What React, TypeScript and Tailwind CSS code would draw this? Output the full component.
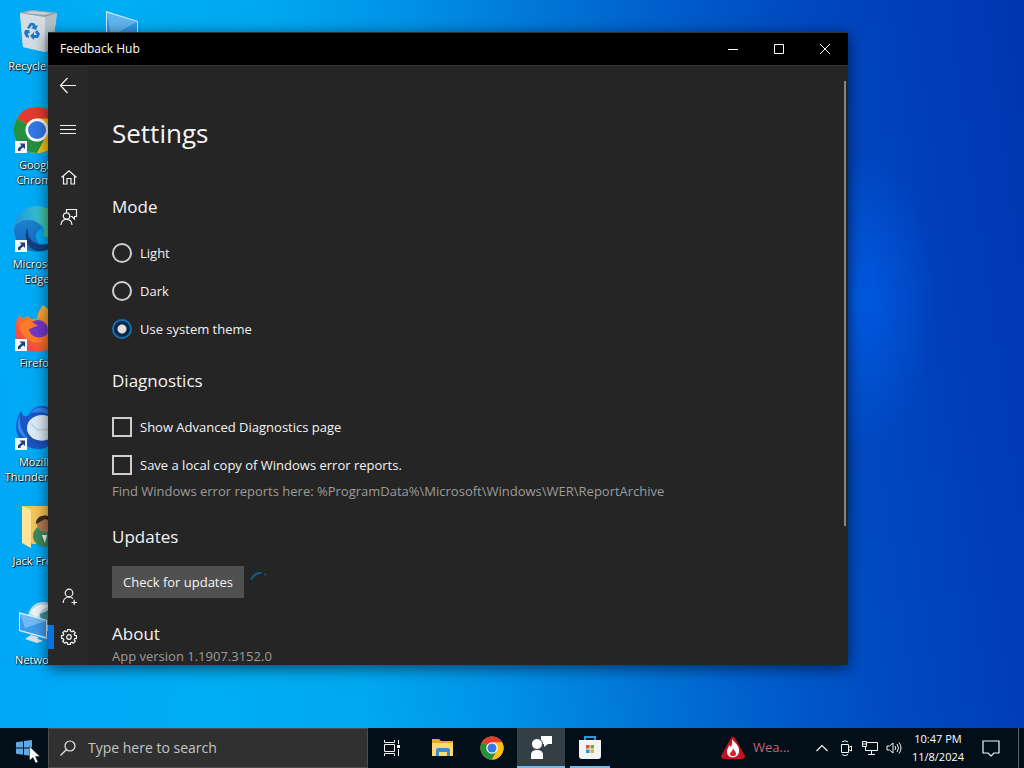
import type { ReactNode } from "react";

function ShortcutArrow() {
  return (
    <g transform="translate(2 35)">
      <rect width="12" height="12" fill="#f4f6f8" />
      <path d="M3 10V7.5L6.5 4.5L4.5 2.5H10V8L8.2 6.2L5.5 8.5V10Z" fill="#1f3f7a" />
    </g>
  );
}

function Art({ children }: { children: ReactNode }) {
  return (
    <svg viewBox="0 0 48 48" className="h-12 w-12 shrink-0" aria-hidden="true">
      {children}
    </svg>
  );
}

const recycleBin = (
  <Art>
    <path d="M7 6L18 3L44 6L39 42L32 45L10 40Z" fill="#cfd8de" />
    <path d="M7 6L32 10L32 45L10 40Z" fill="#d3dce2" />
    <path d="M32 10L44 6L39 42L32 45Z" fill="#b4bfc7" />
    <path d="M7 6L18 3L44 6L32 10Z" fill="#8f9ca6" />
    <path d="M11 6L19 4L39 6L31 8Z" fill="#c9d2d8" />
    <g fill="#1c78c8">
      <path d="M14 21L17 16L21 16L23 19L25 18L23 23L18 21L20 20L19 18L16 22Z" />
      <path d="M24 23L27 27L25 31L21 31V33L17 29L21 25V28H24L22 25Z" />
      <path d="M12 23L16 23L17 26L15 26L16 31L13 30L11 26Z" />
    </g>
  </Art>
);

function ChromeShape() {
  return (
    <g>
      <circle cx="24" cy="24" r="23" fill="#fbc116" />
      <path d="M24 24L4 12.500A23 23 0 0 1 44 12.500Z" fill="#e33b2e" />
      <path d="M4 12.500A23 23 0 0 0 24 47L34 29.500L24 24Z" fill="#24913f" />
      <path d="M24 12.500H44A23 23 0 0 1 24 47L33.500 29.500Z" fill="#fbc116" />
      <circle cx="24" cy="24" r="11.500" fill="#fff" />
      <circle cx="24" cy="24" r="9" fill="#3478e5" />
    </g>
  );
}

const edge = (
  <Art>
    <defs>
      <linearGradient id="edgeTop" x1="0" y1="0" x2="1" y2="0">
        <stop offset="0" stopColor="#1f94d6" />
        <stop offset="0.5" stopColor="#36bdd0" />
        <stop offset="1" stopColor="#5fd65c" />
      </linearGradient>
      <linearGradient id="edgeBody" x1="0" y1="0" x2="0" y2="1">
        <stop offset="0" stopColor="#1b7fcf" />
        <stop offset="1" stopColor="#1569b8" />
      </linearGradient>
    </defs>
    <path d="M1 24A23 23 0 0 1 47 24C47 32 38 34 30 31C36 20 24 12 1 24Z" fill="url(#edgeTop)" />
    <path d="M1 24C5 12 26 12 29 24C20 26 20 40 36 44C18 52 1 41 1 24Z" fill="url(#edgeBody)" />
    <path d="M15 23C13 38 28 44 43 36C36 50 16 50 13 34C12 29 13 25 15 23Z" fill="#123f80" />
  </Art>
);

const firefox = (
  <Art>
    <defs>
      <linearGradient id="foxBody" x1="1" y1="0" x2="0" y2="1">
        <stop offset="0" stopColor="#ffe14a" />
        <stop offset="0.5" stopColor="#ff7a24" />
        <stop offset="1" stopColor="#f0255e" />
      </linearGradient>
    </defs>
    <path d="M30 1C36 6 46 14 46 27A22 21 0 0 1 2 27C2 20 4 14 7 11L9 15L15 12C16 15 20 15 24 15C24 10 27 5 30 1Z" fill="url(#foxBody)" />
    <circle cx="25" cy="26" r="10" fill="#7239c8" />
    <path d="M6 20C13 14 20 18 25 22C20 22 19 25 16 25C17 34 30 37 36 28C36 43 10 44 6 20Z" fill="#ff7a2b" />
  </Art>
);

const thunderbird = (
  <Art>
    <path d="M8 8C10 14 12 14 16 12C20 1 36 0 42 10C50 26 42 46 25 46C8 46 -4 27 8 8Z" fill="#1b55c6" />
    <path d="M7 13C6 22 10 32 17 37C7 34 1 24 7 13Z" fill="#2f8cf0" />
    <path d="M17 10C24 1 35 4 39 12L28 9Z" fill="#2e83ea" />
    <ellipse cx="29" cy="25" rx="15" ry="13" fill="#dcebf8" />
    <path d="M18 20Q23 28 29 27Q35 28 41 20" fill="none" stroke="#bcd2e6" strokeWidth="1.500" />
    <path d="M14 30C18 37 30 41 40 34C34 46 16 44 14 30Z" fill="#1d4fae" />
  </Art>
);

const userFolder = (
  <Art>
    <path d="M9 4H38V42H20L9 38Z" fill="#f1c659" />
    <path d="M9 4L18 8V46L9 41Z" fill="#ffe49a" />
    <ellipse cx="32" cy="34" rx="12" ry="11" fill="#3d8a5d" />
    <circle cx="32" cy="22" r="8" fill="#b77950" />
    <path d="M23 22C22 12 38 10 41 20L32 17Z" fill="#3a2a22" />
    <path d="M29 33L32 41L34 33Z" fill="#fff" />
  </Art>
);

const network = (
  <Art>
    <circle cx="30" cy="16" r="15" fill="#b8dbea" />
    <path d="M17 12C22 2 34 2 36 6C30 6 26 12 24 17Z" fill="#eef6f9" />
    <path d="M27 13L38 8V25L28 21Z" fill="#438b98" />
    <path d="M6 11L34 19V38L6 30Z" fill="#d6f0fd" />
    <path d="M7 13L33 20V36L7 29Z" fill="#3d9be9" />
    <path d="M7 13L33 20L12 27Z" fill="#71bbf4" />
    <path d="M18 34L25 36V38L30 40L24 42L12 38Z" fill="#dce3e8" />
  </Art>
);

const thisPc = (
  <Art>
    <path d="M7 4L39 14V38L7 32Z" fill="#c6eafb" />
    <path d="M8 6L38 15V36L8 30Z" fill="#2f97e4" />
    <path d="M8 6L38 15L12 29Z" fill="#5eb5ef" />
  </Art>
);

const shortcuts: { lines: string[]; art: ReactNode }[] = [
  { lines: ["Recycle Bin"], art: recycleBin },
  { lines: ["Google", "Chrome"], art: <Art><ChromeShape /><ShortcutArrow /></Art> },
  { lines: ["Microsoft", "Edge"], art: <div className="grid *:col-start-1 *:row-start-1">{edge}<Art><ShortcutArrow /></Art></div> },
  { lines: ["Firefox"], art: <div className="grid *:col-start-1 *:row-start-1">{firefox}<Art><ShortcutArrow /></Art></div> },
  { lines: ["Mozilla", "Thunderbird"], art: <div className="grid *:col-start-1 *:row-start-1">{thunderbird}<Art><ShortcutArrow /></Art></div> },
  { lines: ["Jack Frost"], art: userFolder },
  { lines: ["Network"], art: network },
];

function Shortcut({ lines, art }: { lines: string[]; art: ReactNode }) {
  return (
    <button type="button" className="flex h-[99px] w-[74px] flex-col items-center gap-[3px] text-[11px] leading-[15px] text-white [text-shadow:1px_1px_1px_#000,0_0_2px_#000]">
      {art}
      <span className="flex flex-col items-center whitespace-nowrap">
        {lines.map((line) => (
          <span key={line}>{line}</span>
        ))}
      </span>
    </button>
  );
}

function Glyph({ children, label }: { children: ReactNode; label: string }) {
  return (
    <button type="button" aria-label={label} className="flex h-10 w-10 items-center justify-center">
      <svg viewBox="0 0 16 16" className="h-4 w-4 overflow-visible" fill="none" stroke="#f2f2f2" strokeWidth="1.200">
        {children}
      </svg>
    </button>
  );
}

const gearPath = Array.from({ length: 8 }, (_, i) => {
  const point = (deg: number, r: number) => {
    const a = ((i * 45 + deg) * Math.PI) / 180;
    return `${(9 + r * Math.cos(a)).toFixed(2)} ${(8 + r * Math.sin(a)).toFixed(2)}`;
  };
  return `${i ? "L" : "M"}${point(-11, 7.6)}L${point(11, 7.6)}L${point(15, 6)}L${point(30, 6)}`;
}).join("") + "Z";

function Sidebar() {
  return (
    <nav className="flex w-10 shrink-0 flex-col bg-[#282828]">
      <Glyph label="Back"><path d="M16 7.500H0.500M7.500 0L0.500 7.500L7.500 15" /></Glyph>
      <div className="flex flex-col pt-1">
        <Glyph label="Menu"><path d="M0 3.500H16M0 7.500H16M0 11.500H16" /></Glyph>
      </div>
      <div className="flex flex-col pt-2">
        <Glyph label="Home"><path d="M1.500 7.500L9 0.800L16.500 7.500M3.500 6V14H7V8.500H11V14H14.500V6" /></Glyph>
        <Glyph label="Feedback">
          <path d="M6.500 2.500V-0.500H16.500V6.500H14.500V9L12 6.500H10.500" />
          <circle cx="6.500" cy="6" r="3.200" />
          <path d="M1 15C1.500 7.500 11.500 7.500 12 15" />
        </Glyph>
      </div>
      <div className="mt-auto flex flex-col pb-2">
        <Glyph label="Sign in">
          <circle cx="9" cy="4" r="3.800" />
          <path d="M3 14C3.500 9.800 6 8 9 8C10.500 8 12 8.500 13 9.500M11.500 13.500H17M14.200 10.700V16" />
        </Glyph>
        <div className="grid items-center *:col-start-1 *:row-start-1">
          <span className="h-6 w-1.5 bg-[#0873d8]" />
          <Glyph label="Settings">
            <path d={gearPath} />
            <circle cx="9" cy="8" r="2.300" />
          </Glyph>
        </div>
      </div>
    </nav>
  );
}

const radioClass =
  "h-5 w-5 appearance-none rounded-full border-2 border-[#cfcfcf] checked:border-[#1470b0] checked:bg-[radial-gradient(circle,#e4e0dc_0_4px,#08294a_5px)]";
const checkClass = "h-5 w-5 appearance-none border-2 border-[#cfcfcf] checked:bg-[#1470b0]";

function Heading({ children }: { children: ReactNode }) {
  return <h2 className="text-[17px] leading-6">{children}</h2>;
}

function Settings() {
  return (
    <main className="flex min-w-0 flex-1 flex-col items-start overflow-hidden pl-6 pt-[49px] text-[#f4f4f4]">
      <h1 className="text-[26px] leading-9">Settings</h1>
      <section className="flex flex-col gap-6 pt-11 text-[13px] leading-5">
        <Heading>Mode</Heading>
        <div className="flex flex-col gap-[18px]">
          {["Light", "Dark", "Use system theme"].map((name) => (
            <label key={name} className="flex items-center gap-2">
              <input type="radio" name="mode" defaultChecked={name === "Use system theme"} className={radioClass} />
              {name}
            </label>
          ))}
        </div>
      </section>
      <section className="flex flex-col pt-[30px] text-[13px] leading-5">
        <Heading>Diagnostics</Heading>
        <div className="flex flex-col gap-[18px] pt-6">
          {["Show Advanced Diagnostics page", "Save a local copy of Windows error reports."].map((name) => (
            <label key={name} className="flex items-center gap-2">
              <input type="checkbox" className={checkClass} />
              {name}
            </label>
          ))}
        </div>
        <p className="pt-1.5 text-[#9c9c9c]">Find Windows error reports here: %ProgramData%\Microsoft\Windows\WER\ReportArchive</p>
      </section>
      <section className="flex flex-col gap-[17px] pt-6 text-[13px] leading-5">
        <Heading>Updates</Heading>
        <div className="flex gap-1.5">
          <button type="button" className="h-8 w-[132px] bg-[#505050]">Check for updates</button>
          <svg viewBox="0 0 18 18" className="mt-1 h-[18px] w-[18px]" fill="none" stroke="#175a85" strokeWidth="2" strokeLinecap="round" aria-hidden="true">
            <path d="M1.500 9Q5 2.500 10.500 3" />
            <path d="M15 4.500V4.600" />
          </svg>
        </div>
      </section>
      <section className="flex flex-col pt-6 text-[13px] leading-5">
        <Heading>About</Heading>
        <p className="text-[#9c9c9c]">App version 1.1907.3152.0</p>
      </section>
    </main>
  );
}

function FeedbackWindow() {
  return (
    <div className="absolute left-12 top-8 flex h-[633px] w-[800px] flex-col overflow-hidden border-t border-[#303030] bg-[#252525] shadow-[0_3px_14px_rgba(0,0,0,0.6)]">
      <header className="flex h-8 shrink-0 items-center bg-black pl-3 text-xs text-white">
        <span className="flex-1">Feedback Hub</span>
        {[
          ["Minimize", "M0 5.500H10"],
          ["Maximize", "M0.500 0.500H9.500V9.500H0.500Z"],
          ["Close", "M0 0L10 10M10 0L0 10"],
        ].map(([label, d]) => (
          <button key={label} type="button" aria-label={label} className="flex h-8 w-[46px] items-center justify-center">
            <svg viewBox="0 0 10 10" className="h-2.5 w-2.5" fill="none" stroke="#fff">
              <path d={d} />
            </svg>
          </button>
        ))}
      </header>
      <div className="flex min-h-0 flex-1 border-t border-[#333]">
        <Sidebar />
        <Settings />
        <div className="w-1 pt-[15px]">
          <div className="h-[445px] w-0.5 bg-[#858585]" />
        </div>
      </div>
    </div>
  );
}

function TrayButton({ label, children }: { label: string; children: ReactNode }) {
  return (
    <button type="button" aria-label={label} className="flex h-10 w-6 items-center justify-center">
      <svg viewBox="0 0 16 16" className="h-4 w-4" fill="none" stroke="#f4f4f4">
        {children}
      </svg>
    </button>
  );
}

function TaskButton({ label, state = "w-12", children }: { label: string; state?: string; children: ReactNode }) {
  return (
    <button type="button" aria-label={label} className={`flex h-10 items-center justify-center ${state}`}>
      <svg viewBox="0 0 24 24" className="h-6 w-6">
        {children}
      </svg>
    </button>
  );
}

function Taskbar() {
  return (
    <footer className="relative flex h-10 shrink-0 items-center bg-[#020f18] text-white">
      <button type="button" aria-label="Start" className="flex h-10 w-12 items-center justify-center">
        <svg viewBox="0 0 16 16" className="h-4 w-4" fill="#5fa8e4">
          <path d="M0 2.200L7 1.200V7.500H0ZM8 1L16 0V7.500H8ZM0 8.500H7V14.800L0 13.800ZM8 8.500H16V16L8 15Z" />
        </svg>
      </button>
      <label className="flex h-10 w-80 items-center gap-3 border border-[#4c4c4c] bg-[#303030] pl-[11px]">
        <svg viewBox="0 0 16 16" className="h-4 w-4" fill="none" stroke="#e8e8e8" strokeWidth="1.200">
          <circle cx="10" cy="6" r="5" />
          <path d="M6.500 9.500L0.500 15.500" />
        </svg>
        <input type="text" aria-label="Search" placeholder="Type here to search" className="min-w-0 flex-1 bg-transparent text-sm outline-none placeholder:text-[#c4c4c4]" />
      </label>
      <TaskButton label="Task view">
        <g fill="none" stroke="#f4f4f4">
          <path d="M4.500 4V6.500H14.500V4M4.500 8.500H14.500V15.500H4.500ZM4.500 20V17.500H14.500V20M18.500 4V8M18.500 13V20" />
          <path d="M17 10.500H20" strokeWidth="3" />
        </g>
      </TaskButton>
      <div className="flex gap-px pl-[3px]">
        <TaskButton label="File Explorer">
          <path d="M1 3H8L10 5H22V20H1Z" fill="#e9a925" />
          <path d="M1 7H22V20H1Z" fill="#ffda6a" />
          <path d="M5 20V14Q5 12 7 12H17Q19 12 19 14V20H16V16H8V20Z" fill="#348ed0" />
        </TaskButton>
        <TaskButton label="Google Chrome">
          <g transform="scale(0.5)"><ChromeShape /></g>
        </TaskButton>
        <TaskButton label="Feedback Hub" state="w-12 border-b-2 border-[#76b9ed] bg-[#333e45]">
          <path d="M12 1H23V9H19L15 12V9H12Z" fill="#fff" />
          <circle cx="8" cy="9" r="5.500" fill="#fff" stroke="#333e45" />
          <path d="M2 24V20Q2 15 8 15Q14 15 14 20V24Z" fill="#fff" />
        </TaskButton>
        <TaskButton label="Microsoft Store" state="mx-1 w-10 border-b-2 border-[#76b9ed]">
          <path d="M7 6V2H17V6" fill="none" stroke="#239be0" strokeWidth="2" />
          <path d="M1 5H23V21Q23 24 20 24H4Q1 24 1 21Z" fill="#f3f4f6" />
          <path d="M8 10H11.500V13.500H8Z" fill="#d95732" />
          <path d="M12.500 10H16V13.500H12.500Z" fill="#78a62c" />
          <path d="M8 14.500H11.500V18H8Z" fill="#2693cf" />
          <path d="M12.500 14.500H16V18H12.500Z" fill="#e6ac28" />
        </TaskButton>
      </div>
      <div className="ml-auto flex items-center">
        <button type="button" className="flex h-10 w-[89px] items-center gap-2 text-[13px] text-[#c86478]">
          <svg viewBox="0 0 24 24" className="h-6 w-6" aria-hidden="true">
            <path d="M10 2Q12 -1 14 2L24 20Q24 23 21 23H3Q0 23 0 20Z" fill="#c4121f" />
            <path d="M11 3C14 7 19 10 18 16C17 23 6 23 6 16C6 12 8 12 8 9L10 11Q12 7 11 3Z" fill="#fff" />
            <path d="M12 12C13 15 15 15 15 18C15 21 9 21 9 18C9 16 12 15 12 12Z" fill="#d8222d" />
          </svg>
          Wea...
        </button>
        <TrayButton label="Show hidden icons"><path d="M2.500 11L8 5.500L13.500 11" strokeWidth="1.200" /></TrayButton>
        <TrayButton label="Meet now">
          <path d="M3.500 4.500H10.500V12.500H3.500ZM10.500 7.500L13.500 6V11L10.500 9.500M4 2Q7 -0.500 10 2M4 14.500Q7 17 10 14.500" />
        </TrayButton>
        <TrayButton label="Network">
          <path d="M4.500 2.500H15.500V10.500H3.500V6.500M9.500 10.500V14.500M6 14.500H13M0.500 1.500H4.500V6.500H0.500ZM0.500 4H4.500" />
        </TrayButton>
        <TrayButton label="Volume">
          <path d="M1 6H3.500L7 3V13L3.500 10H1ZM9 6Q10.500 8 9 10M11 4Q14 8 11 12M13 2.500Q17 8 13 13.500" />
        </TrayButton>
        <time className="flex w-16 flex-col items-center text-[11px] leading-[18px]">
          <span>10:47 PM</span>
          <span>11/8/2024</span>
        </time>
        <button type="button" aria-label="Notifications" className="flex h-10 w-[42px] items-center justify-center">
          <svg viewBox="0 0 18 18" className="h-[18px] w-[18px]" fill="none" stroke="#f4f4f4" strokeWidth="1.200">
            <path d="M1 2H17V14H12L9 17L6 14H1Z" />
          </svg>
        </button>
        <span className="ml-1.5 h-10 w-1.5 border-l border-[#59636a]" />
      </div>
      <svg viewBox="0 0 12 18" className="absolute left-[29px] top-[18px] h-[18px] w-3" aria-hidden="true">
        <path d="M0.500 0.500V14.500L4 11.500L6.500 17L9 16L6.500 10.500H11Z" fill="#fff" stroke="#111" strokeWidth="0.500" />
      </svg>
    </footer>
  );
}

export default function App() {
  return (
    <div className="flex min-h-screen flex-col font-['Open_Sans','Noto_Sans',sans-serif]">
      <div className="relative flex flex-1 items-start gap-3 overflow-hidden bg-[radial-gradient(ellipse_75px_150px_at_860px_300px,rgba(0,95,235,0.75),transparent),linear-gradient(82deg,#00a8f8_0%,#00adf2_20%,#00a8f0_33%,#0092e6_45%,#0076d8_57%,#005ecc_68%,#004cc2_78%,#0040ba_88%,#0036b0_100%)] pt-[7px]">
        <div className="flex flex-col">
          {shortcuts.map((item) => (
            <Shortcut key={item.lines[0]} {...item} />
          ))}
        </div>
        <Shortcut lines={["This PC"]} art={thisPc} />
        <FeedbackWindow />
      </div>
      <Taskbar />
    </div>
  );
}
